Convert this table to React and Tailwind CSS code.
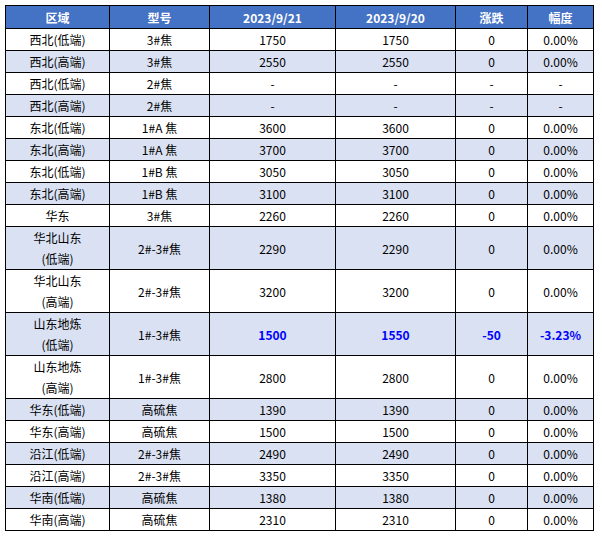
import React from "react";

const rows = [
  ["西北(低端)", "3#焦", "1750", "1750", "0", "0.00%"],
  ["西北(高端)", "3#焦", "2550", "2550", "0", "0.00%"],
  ["西北(低端)", "2#焦", "-", "-", "-", "-"],
  ["西北(高端)", "2#焦", "-", "-", "-", "-"],
  ["东北(低端)", "1#A 焦", "3600", "3600", "0", "0.00%"],
  ["东北(高端)", "1#A 焦", "3700", "3700", "0", "0.00%"],
  ["东北(低端)", "1#B 焦", "3050", "3050", "0", "0.00%"],
  ["东北(高端)", "1#B 焦", "3100", "3100", "0", "0.00%"],
  ["华东", "3#焦", "2260", "2260", "0", "0.00%"],
  [["华北山东", "(低端)"], "2#-3#焦", "2290", "2290", "0", "0.00%"],
  [["华北山东", "(高端)"], "2#-3#焦", "3200", "3200", "0", "0.00%"],
  [["山东地炼", "(低端)"], "1#-3#焦", "1500", "1550", "-50", "-3.23%", true],
  [["山东地炼", "(高端)"], "1#-3#焦", "2800", "2800", "0", "0.00%"],
  ["华东(低端)", "高硫焦", "1390", "1390", "0", "0.00%"],
  ["华东(高端)", "高硫焦", "1500", "1500", "0", "0.00%"],
  ["沿江(低端)", "2#-3#焦", "2490", "2490", "0", "0.00%"],
  ["沿江(高端)", "2#-3#焦", "3350", "3350", "0", "0.00%"],
  ["华南(低端)", "高硫焦", "1380", "1380", "0", "0.00%"],
  ["华南(高端)", "高硫焦", "2310", "2310", "0", "0.00%"],
];

const headers = ["区域", "型号", "2023/9/21", "2023/9/20", "涨跌", "幅度"];
const widths = ["w-[104px]", "w-[100px]", "w-[126px]", "w-[120px]", "w-[72px]", "w-[66px]"];

export default function App() {
  return (
    <div
      className="w-[602px] h-[544px] bg-white pl-[5px] pt-[5px]"
      style={{ fontFamily: '"Noto Sans CJK SC", "Noto Sans", sans-serif' }}
    >
      <table className="border-collapse text-[12px] text-black table-fixed w-[589px]">
        <colgroup>
          {widths.map((w, i) => (
            <col key={i} className={w} />
          ))}
        </colgroup>
        <thead>
          <tr className="bg-[#4472C4] h-[23px]">
            {headers.map((h, i) => (
              <th
                key={i}
                className="border border-black p-0 text-white font-bold text-center leading-[21px]"
              >
                {h}
              </th>
            ))}
          </tr>
        </thead>
        <tbody>
          {rows.map((r, idx) => {
            const two = Array.isArray(r[0]);
            const hl = r[6];
            return (
              <tr
                key={idx}
                className={`${idx % 2 === 1 ? "bg-[#D9E1F2]" : "bg-white"} ${
                  two ? "h-[43px]" : "h-[22px]"
                }`}
              >
                {r.slice(0, 6).map((c, i) => (
                  <td
                    key={i}
                    className={`border border-black p-0 text-center leading-[21px] ${
                      hl && i >= 2 ? "text-[#0000FF] font-bold" : ""
                    }`}
                  >
                    {Array.isArray(c) ? (
                      <>
                        {c[0]}
                        <br />
                        {c[1]}
                      </>
                    ) : (
                      c
                    )}
                  </td>
                ))}
              </tr>
            );
          })}
        </tbody>
      </table>
    </div>
  );
}
